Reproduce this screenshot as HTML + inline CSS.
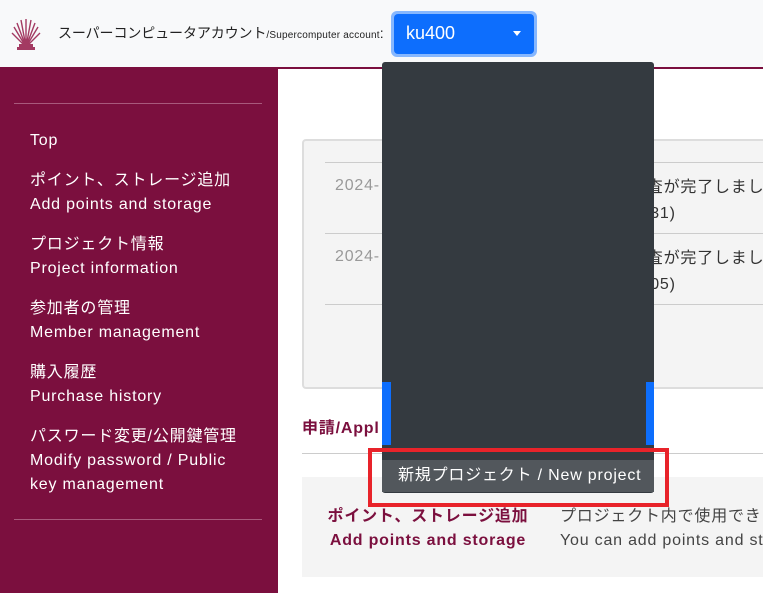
<!DOCTYPE html>
<html><head><meta charset="utf-8"><style>
*{margin:0;padding:0;box-sizing:border-box}
body{width:763px;height:593px;overflow:hidden;position:relative;background:#fff;font-family:"Liberation Sans","Noto Sans CJK JP",sans-serif}
.abs{position:absolute}
.hdr{left:0;top:0;width:763px;background:#f8f9fa;border-bottom:2px solid #7b0f3e;height:69px}
.side{left:0;top:69px;width:278px;height:524px;background:#7b0f3e;color:#fff}
.side .it{position:absolute;left:30px;font-size:16px;line-height:24px;letter-spacing:0.8px}
.hr{position:absolute;left:14px;width:248px;height:1px;background:#a8597c}
.ls{letter-spacing:0.8px}
</style></head><body>
<div class="abs hdr"></div>
<svg class="abs" style="left:11px;top:17px" width="30" height="34" viewBox="0 0 30 34">
<g stroke="#a33a62" stroke-width="1.4" fill="none">
<path d="M15 30 L3 10 M15 30 L6 6 M15 30 L10 3 M15 30 L15 2 M15 30 L20 3 M15 30 L24 6 M15 30 L27 10 M15 30 L1 16 M15 30 L29 16"/>
</g><rect x="8" y="27" width="14" height="3" fill="#a33a62"/><rect x="6" y="30" width="18" height="3" fill="#a33a62"/></svg>
<div class="abs" style="left:58px;top:23px;font-size:14px;color:#222;letter-spacing:-0.1px">スーパーコンピュータアカウント<span style="font-size:10px;letter-spacing:0.2px">/Supercomputer account</span>:</div>
<div class="abs" style="left:391px;top:11px;width:146px;height:46px;border-radius:6px;background:#86b7fe"></div>
<div class="abs" style="left:394px;top:14px;width:140px;height:40px;border-radius:4px;background:#0d6efd;color:#fff;font-size:18px;line-height:38px;padding-left:12px">ku400</div>
<div class="abs" style="left:513px;top:31px;width:0;height:0;border-left:4px solid transparent;border-right:4px solid transparent;border-top:5px solid #fff"></div>
<div class="abs side">
<div class="hr" style="top:34px"></div>
<div class="it" style="top:60px">Top</div>
<div class="it" style="top:100px">ポイント、ストレージ追加<br>Add points and storage</div>
<div class="it" style="top:164px">プロジェクト情報<br>Project information</div>
<div class="it" style="top:228px">参加者の管理<br>Member management</div>
<div class="it" style="top:292px">購入履歴<br>Purchase history</div>
<div class="it" style="top:356px">パスワード変更/公開鍵管理<br>Modify password / Public<br>key management</div>
<div class="hr" style="top:450px"></div>
</div>
<div class="abs" style="left:302px;top:139px;width:470px;height:250px;background:#f4f4f4;border:2px solid #ddd;border-radius:4px"></div>
<div class="abs" style="left:325px;top:162px;width:440px;height:1px;background:#ccc"></div>
<div class="abs" style="left:325px;top:233px;width:440px;height:1px;background:#ccc"></div>
<div class="abs" style="left:325px;top:304px;width:440px;height:1px;background:#ccc"></div>
<div class="abs ls" style="left:335px;top:177px;font-size:16px;color:#999">2024-</div>
<div class="abs ls" style="left:335px;top:248px;font-size:16px;color:#999">2024-</div>
<div class="abs ls" style="left:630px;top:175px;font-size:16px;color:#333;line-height:26px;white-space:nowrap">審査が完了しまし<br>&nbsp;&nbsp;031)</div>
<div class="abs ls" style="left:630px;top:246px;font-size:16px;color:#333;line-height:26px;white-space:nowrap">審査が完了しまし<br>&nbsp;&nbsp;005)</div>
<div class="abs ls" style="left:302px;top:414px;font-size:16px;font-weight:bold;color:#7b0f3e">申請/Appl</div>
<div class="abs" style="left:302px;top:453px;width:461px;height:1px;background:#ccc"></div>
<div class="abs" style="left:302px;top:477px;width:461px;height:100px;background:#f4f4f4"></div>
<div class="abs ls" style="left:326px;top:505px;width:204px;font-size:16px;font-weight:bold;color:#7b0f3e;line-height:24px;text-align:center">ポイント、ストレージ追加<br>Add points and storage</div>
<div class="abs ls" style="left:560px;top:505px;font-size:16px;color:#444;line-height:24px;white-space:nowrap">プロジェクト内で使用できる<br>You can add points and st</div>
<div class="abs" style="left:382px;top:62px;width:272px;height:431px;background:#343a40;border-radius:3px"></div>
<div class="abs" style="left:382px;top:382px;width:9px;height:63px;background:#0d6efd"></div>
<div class="abs" style="left:646px;top:382px;width:8px;height:63px;background:#0d6efd"></div>
<div class="abs ls" style="left:382px;top:460px;width:272px;height:32px;background:#52575c;color:#fff;font-size:16px;line-height:32px;padding-left:16px">新規プロジェクト / New project</div>
<div class="abs" style="left:368px;top:448px;width:301px;height:59px;border:4px solid #e8232a"></div>
</body></html>
